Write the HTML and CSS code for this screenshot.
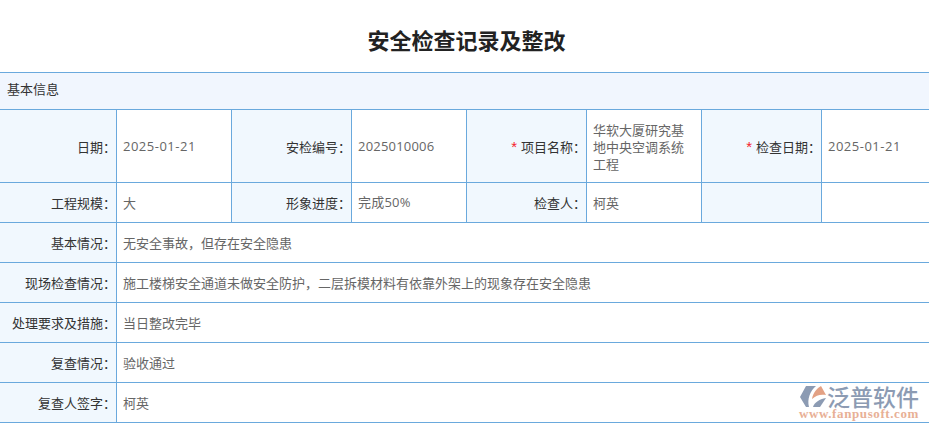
FILE: index.html
```html
<!DOCTYPE html>
<html lang="zh">
<head>
<meta charset="utf-8">
<title>安全检查记录及整改</title>
<link rel="stylesheet" href="styles.css">
</head>
<body>
<h1 class="title">安全检查记录及整改</h1>
<div class="form">
  <div class="section">基本信息</div>
  <div class="cell label">日期：</div>
  <div class="cell value num date">2025-01-21</div>
  <div class="cell label">安检编号：</div>
  <div class="cell value num">2025010006</div>
  <div class="cell label"><span class="req">*</span>项目名称：</div>
  <div class="cell value">华软大厦研究基地中央空调系统工程</div>
  <div class="cell label"><span class="req">*</span>检查日期：</div>
  <div class="cell value num date">2025-01-21</div>

  <div class="cell label">工程规模：</div>
  <div class="cell value">大</div>
  <div class="cell label">形象进度：</div>
  <div class="cell value num">完成50%</div>
  <div class="cell label">检查人：</div>
  <div class="cell value">柯英</div>
  <div class="cell label"></div>
  <div class="cell value"></div>

  <div class="cell label">基本情况：</div>
  <div class="cell value wide">无安全事故，但存在安全隐患</div>
  <div class="cell label">现场检查情况：</div>
  <div class="cell value wide">施工楼梯安全通道未做安全防护，二层拆模材料有依靠外架上的现象存在安全隐患</div>
  <div class="cell label">处理要求及措施：</div>
  <div class="cell value wide">当日整改完毕</div>
  <div class="cell label">复查情况：</div>
  <div class="cell value wide">验收通过</div>
  <div class="cell label">复查人签字：</div>
  <div class="cell value wide">柯英</div>
</div>
<div class="mark">
  <svg class="mark-icon" viewBox="0 0 26 23" width="26" height="23" aria-hidden="true">
    <path d="M0 12 L6 1 H16 C10 6 7 14 9 22 H6 Z" fill="#8c9bb3"/>
    <path d="M12 14 C13 8 17 3 21 1 L26 10 C21 9 16 10 12 14 Z" fill="#e3a184"/>
    <path d="M13 22 C14 18 19 14 26 13 L20 22 Z" fill="#8c9bb3"/>
  </svg>
  <div class="mark-text">
    <div class="mark-name">泛普软件</div>
    <div class="mark-url">www.fanpusoft.com</div>
  </div>
</div>
</body>
</html>
```
FILE: styles.css
```css
html, body {
  margin: 0;
  padding: 0;
  background: #fff;
  overflow: hidden;
}
body {
  position: relative;
  width: 929px;
  height: 429px;
  font-family: "Noto Sans CJK SC", "Noto Sans", sans-serif;
  font-size: 13px;
  color: #333;
}
.title {
  margin: 0;
  height: 72px;
  box-sizing: border-box;
  padding: 6px 0 0 4px;
  display: flex;
  align-items: center;
  justify-content: center;
  font-size: 22px;
  font-weight: 700;
  color: #222;
}
.form {
  display: grid;
  grid-template-columns: 117px 115px 120px 115px 120px 115px 120px 107px;
  grid-template-rows: 37px 73px repeat(6, 40px);
  border-top: 1px solid #6aa9dd;
}
.section {
  grid-column: 1 / -1;
  box-sizing: border-box;
  display: flex;
  align-items: center;
  padding: 0 0 6px 7px;
  background: #f1f6fe;
  border-bottom: 1px solid #6aa9dd;
}
.cell {
  box-sizing: border-box;
  display: flex;
  align-items: center;
  border-bottom: 1px solid #6aa9dd;
  border-right: 1px solid #6aa9dd;
  line-height: 17px;
}
.cell:nth-child(9),
.cell:nth-child(17),
.value.wide {
  border-right: 0;
}
.label {
  justify-content: flex-end;
  background: #f1f8fe;
  color: #333;
}
.value {
  padding: 0 6px;
  color: #666;
}
.num {
  font-family: "Open Sans", "Noto Sans CJK SC", sans-serif;
  letter-spacing: 0.2px;
}
.date {
  letter-spacing: 0.5px;
}
.wide {
  grid-column: 2 / -1;
}
.req {
  font-family: "Liberation Sans", sans-serif;
  font-size: 15px;
  color: #f5222d;
  margin-right: 4px;
}
.mark {
  position: absolute;
  left: 800px;
  top: 384px;
}
.mark-icon {
  position: absolute;
  left: 0;
  top: 1px;
}
.mark-text {
  margin-left: 1px;
  display: flex;
  flex-direction: column;
  align-items: flex-end;
  width: 118px;
}
.mark-name {
  font-size: 23px;
  line-height: 24px;
  font-weight: 500;
  color: #8c9bb3;
}
.mark-url {
  font-family: "Liberation Serif", serif;
  font-size: 13px;
  line-height: 12px;
  font-weight: 700;
  letter-spacing: 0.6px;
  color: #e8b096;
}
```
